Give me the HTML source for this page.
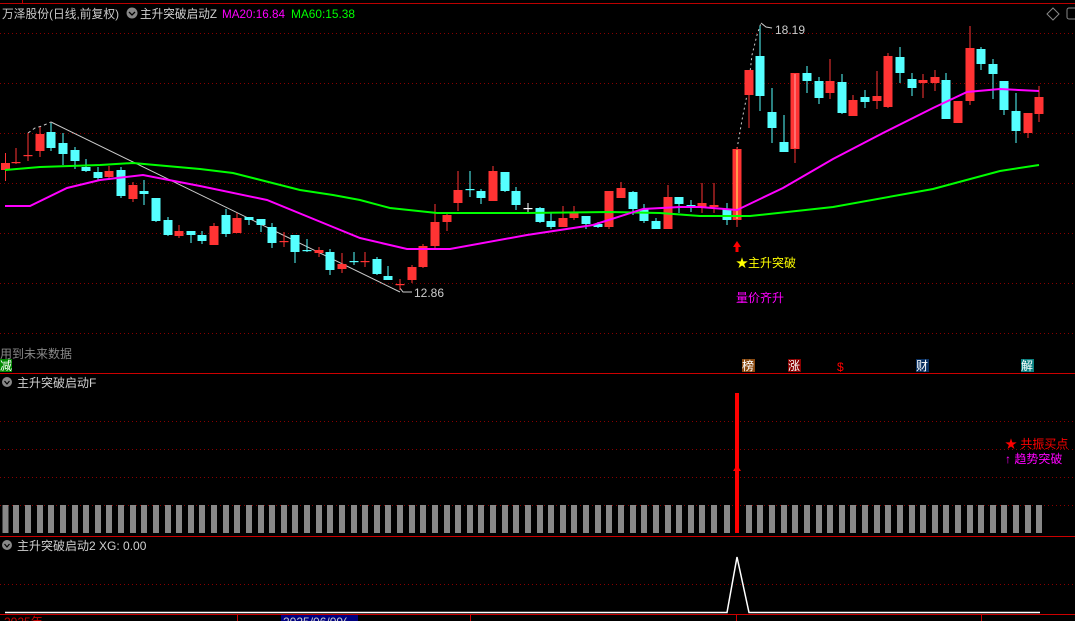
<!DOCTYPE html>
<html><head><meta charset="utf-8">
<style>
html,body{margin:0;padding:0;background:#000;width:1075px;height:621px;overflow:hidden}
svg{display:block}
text{font-family:"Liberation Sans","Noto Sans CJK SC",sans-serif;font-size:12px}
</style></head><body>
<svg id="s" width="1075" height="621" viewBox="0 0 1075 621" xmlns="http://www.w3.org/2000/svg">
<rect width="1075" height="621" fill="#000"/>
<line x1="0" y1="3.5" x2="1075" y2="3.5" stroke="#b00" stroke-width="1"/>
<line x1="22.5" y1="0" x2="22.5" y2="3" stroke="#b00"/>
<g id="grid" stroke="#800" stroke-width="1" stroke-dasharray="1,3">
<line x1="0" y1="33.5" x2="1075" y2="33.5"/><line x1="0" y1="83.5" x2="1075" y2="83.5"/>
<line x1="0" y1="133.5" x2="1075" y2="133.5"/><line x1="0" y1="183.5" x2="1075" y2="183.5"/>
<line x1="0" y1="233.5" x2="1075" y2="233.5"/><line x1="0" y1="283.5" x2="1075" y2="283.5"/>
<line x1="0" y1="333.5" x2="1075" y2="333.5"/>
<line x1="0" y1="421.5" x2="1075" y2="421.5"/><line x1="0" y1="449.5" x2="1075" y2="449.5"/>
<line x1="0" y1="477.5" x2="1075" y2="477.5"/><line x1="0" y1="505.5" x2="1075" y2="505.5"/>
<line x1="0" y1="584.5" x2="1075" y2="584.5"/>
</g>
<text x="2" y="18" fill="#c8c8c8" textLength="117" lengthAdjust="spacingAndGlyphs">万泽股份(日线,前复权)</text>
<circle cx="132" cy="13" r="5.5" fill="#888"/><path d="M129 12 L132 15 L135 12" stroke="#000" stroke-width="1.3" fill="none"/>
<text x="140" y="18" fill="#d0d0d0" textLength="77" lengthAdjust="spacingAndGlyphs">主升突破启动Z</text>
<text x="222" y="18" fill="#ff00ff" textLength="63" lengthAdjust="spacingAndGlyphs">MA20:16.84</text>
<text x="291" y="18" fill="#00ff00" textLength="64" lengthAdjust="spacingAndGlyphs">MA60:15.38</text>
<path d="M1053 8 L1059 14 L1053 20 L1047 14 Z" stroke="#888" fill="none"/>
<rect x="1067" y="8" width="12" height="11" rx="2" stroke="#888" fill="none"/>
<line x1="51" y1="122" x2="400" y2="292" stroke="#ccc" stroke-width="1"/>
<path d="M28 133 L35 128 L42 126 L51 122" stroke="#ccc" stroke-dasharray="3,3" fill="none"/>
<path d="M737 149 L742 120 L748 90 L752 55 L757 35 L761 23" stroke="#ccc" stroke-dasharray="2,3" fill="none"/>
<path d="M761 23 L766 27 L772 28" stroke="#ccc" fill="none"/>
<text x="775" y="34" fill="#ccc">18.19</text>
<path d="M400 288 L403 292 L412 292" stroke="#ccc" fill="none"/>
<text x="414" y="297" fill="#ccc">12.86</text>
<g id="candles"></g>
<polyline fill="none" stroke="#00ff00" stroke-width="2" points="5,170 40,167 100,165 133,163 200,169 233,173 300,190 333,195 360,200 390,208 437,213 527,213 610,212 660,213 700,216 750,216 833,207 933,189 1000,171 1039,165"/>
<polyline fill="none" stroke="#ff00ff" stroke-width="2" points="5,206 30,206 67,188 100,180 143,175 200,186 267,200 333,227 360,238 407,249 450,249 527,235 593,225 643,209 680,207 700,207 737,210 783,188 833,159 883,133 933,108 967,92 1000,89 1039,91"/>
<path d="M737 241 L733 247 L735.5 247 L735.5 252 L738.5 252 L738.5 247 L741 247 Z" fill="#f00"/>
<text x="736" y="267" fill="#ffff00">★主升突破</text>
<text x="736" y="302" fill="#ff00ff">量价齐升</text>
<text x="0" y="358" fill="#888">用到未来数据</text>
<rect x="0" y="359" width="12" height="13" fill="#080"/><text x="0" y="370" fill="#fff" font-size="11">减</text>
<rect x="742" y="359" width="13" height="13" fill="#8a4a10"/><text x="742" y="370" fill="#fff" font-size="12">榜</text>
<rect x="788" y="359" width="13" height="13" fill="#800"/><text x="788" y="370" fill="#fff" font-size="12">涨</text>
<text x="837" y="371" fill="#f00" font-size="11">$</text>
<rect x="916" y="359" width="13" height="13" fill="#0a3060"/><text x="916" y="370" fill="#fff" font-size="12">财</text>
<rect x="1021" y="359" width="13" height="13" fill="#0a8080"/><text x="1021" y="370" fill="#fff" font-size="12">解</text>
<line x1="0" y1="373.5" x2="1075" y2="373.5" stroke="#c00"/>
<circle cx="7" cy="382" r="5" fill="#888"/><path d="M4.5 381 L7 384 L9.5 381" stroke="#000" stroke-width="1.2" fill="none"/>
<text x="17" y="387" fill="#d0d0d0">主升突破启动F</text>
<g id="bars" fill="#888"></g>
<rect x="735" y="393" width="4" height="140" fill="#f00"/>
<path d="M737 465 L733 471 L741 471 Z" fill="#f00"/>
<text x="1005" y="448" fill="#f00">★ 共振买点</text>
<text x="1005" y="463" fill="#ff00ff">↑ 趋势突破</text>
<line x1="0" y1="536.5" x2="1075" y2="536.5" stroke="#c00"/>
<circle cx="7" cy="545" r="5" fill="#888"/><path d="M4.5 544 L7 547 L9.5 544" stroke="#000" stroke-width="1.2" fill="none"/>
<text x="17" y="550" fill="#d0d0d0">主升突破启动2 XG: 0.00</text>
<polyline fill="none" stroke="#fff" stroke-width="1.5" points="5,612.5 727,612.5 737,557 749,612.5 1040,612.5"/>
<line x1="0" y1="614.5" x2="1075" y2="614.5" stroke="#c00"/>
<rect x="281" y="615" width="77" height="6" fill="#000080"/>
<text x="283" y="626" fill="#ccc" font-size="11">2025/06/09(</text>
<text x="4" y="626" fill="#c00" font-size="11">2025年</text>
<g stroke="#c00"><line x1="237.5" y1="614" x2="237.5" y2="621"/><line x1="470.5" y1="614" x2="470.5" y2="621"/><line x1="736.5" y1="614" x2="736.5" y2="621"/><line x1="981.5" y1="614" x2="981.5" y2="621"/></g>
</svg>
<script>
var C=[
[5.5,163,170,153,181,'r'],[16,162,162,148,164,'r'],[28,155,155,133,161,'r'],[40,134,151,127,157,'r'],[51,132,148,123,151,'c'],[63,143,154,133,165,'c'],[75,150,161,147,169,'c'],[86,167,171,159,172,'c'],[98,172,178,167,180,'c'],[109,171,177,166,180,'r'],[121,170,196,167,198,'c'],[133,185,199,182,202,'r'],[144,191,194,180,205,'c'],[156,198,221,198,222,'c'],[168,220,235,217,236,'c'],[179,231,236,225,238,'r'],[191,231,235,231,243,'c'],[202,235,241,231,244,'c'],[214,226,245,223,245,'r'],[226,215,234,209,237,'c'],[237,218,233,213,233,'r'],[249,217,220,217,225,'c'],[261,219,225,219,232,'c'],[272,227,243,223,248,'c'],[284,241,241,232,247,'r'],[295,235,252,235,263,'c'],[307,250,250,239,252,'c'],[319,250,253,247,257,'r'],[330,252,270,249,275,'c'],[342,264,269,253,273,'r'],[354,261,261,252,265,'c'],[365,261,261,252,267,'r'],[377,259,274,257,275,'c'],[388,276,280,266,280,'c'],[400,284,284,279,290,'r'],[412,267,280,265,283,'r'],[423,246,267,244,268,'r'],[435,222,246,204,249,'r'],[447,215,222,213,231,'r'],[458,190,203,171,211,'r'],[470,189,189,171,197,'c'],[481,191,198,189,204,'c'],[493,171,201,166,201,'r'],[505,172,191,172,192,'c'],[516,191,205,187,210,'c'],[528,208,208,203,213,'w'],[540,208,222,207,223,'c'],[551,221,227,213,229,'c'],[563,218,227,206,227,'r'],[574,213,218,206,220,'r'],[586,216,224,216,229,'c'],[598,224,227,222,228,'c'],[609,191,227,191,229,'r'],[621,188,198,182,198,'r'],[633,192,209,191,215,'c'],[644,209,221,204,223,'c'],[656,221,229,218,229,'c'],[668,197,229,185,229,'r'],[679,197,204,197,213,'c'],[691,205,205,200,212,'c'],[702,203,207,183,213,'r'],[714,205,207,183,213,'r'],[727,209,220,203,225,'c'],
[737,149,220,147,227,'r'],[749,70,95,70,128,'r'],[760,56,96,26,111,'c'],[772,112,128,88,143,'c'],[784,142,152,115,152,'c'],[795,73,149,73,163,'r'],[807,73,81,66,93,'c'],[819,81,98,77,104,'c'],[830,81,93,59,99,'r'],[842,82,113,74,114,'c'],[853,100,116,95,116,'r'],[865,97,102,90,108,'c'],[877,96,101,71,109,'r'],[888,56,107,53,108,'r'],[900,57,73,47,83,'c'],[912,79,88,73,96,'c'],[923,80,83,74,98,'r'],[935,77,83,70,91,'r'],[946,80,119,73,119,'c'],[958,101,123,101,123,'r'],[970,48,101,26,105,'r'],[981,49,64,47,70,'c'],[993,64,74,59,99,'c'],[1004,81,110,81,115,'c'],[1016,111,131,93,143,'c'],[1028,113,133,113,138,'r'],[1039,97,114,86,122,'r']];
var col={r:'#ff3333',c:'#55ffff',w:'#ffffff'};
var h='',b='';
C.forEach(function(d){var x=d[0],f=col[d[5]];
h+='<line x1="'+x+'" y1="'+d[3]+'" x2="'+x+'" y2="'+d[4]+'" stroke="'+f+'" stroke-width="1"/>';
var hh=Math.max(d[2]-d[1],1.2);
h+='<rect x="'+(x-4.5)+'" y="'+d[1]+'" width="9" height="'+hh+'" fill="'+f+'"/>';
if(x!=737)b+='<rect x="'+(x-3)+'" y="505" width="6" height="28"/>';});
h+='<line x1="737" y1="150" x2="737" y2="219" stroke="#ffff66" stroke-width="1"/>';
h+='<line x1="795" y1="74" x2="795" y2="148" stroke="#ffaaaa" stroke-width="1"/>';
document.getElementById('candles').innerHTML=h;
document.getElementById('bars').innerHTML=b;
</script>
</body></html>
